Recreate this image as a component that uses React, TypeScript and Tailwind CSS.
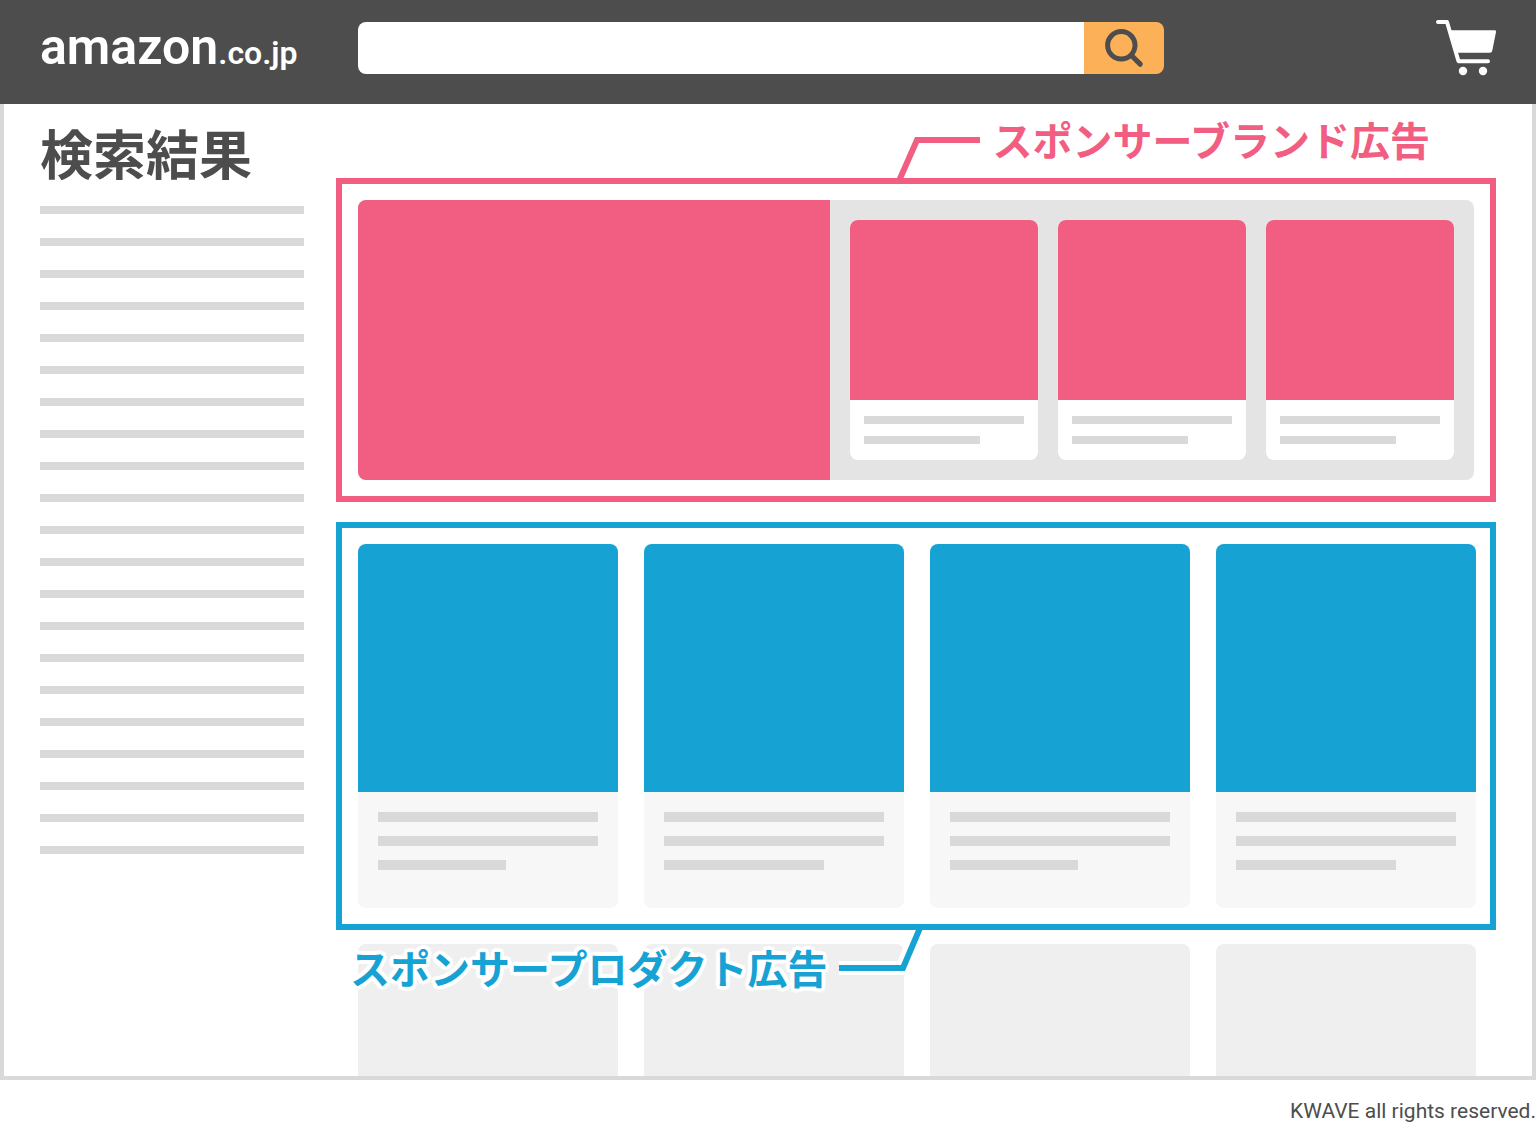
import clsx from 'clsx'

const sideLines = Array.from({ length: 21 }, (_, i) => i)
const brandItems = [1, 2, 3]
const products = [
    { id: 1, lastLine: 'w-32' },
    { id: 2, lastLine: 'w-40' },
    { id: 3, lastLine: 'w-32' },
    { id: 4, lastLine: 'w-40' },
]

function SearchIcon() {
    return (
        <svg viewBox="0 0 40 40" className="h-10 w-10" fill="none" stroke="#4d4d4d" aria-hidden="true">
            <circle cx="17.3" cy="17.3" r="13.7" strokeWidth="5" />
            <path d="M27.5 27.5L36.2 36.2" strokeWidth="5.2" strokeLinecap="round" />
        </svg>
    )
}

function CartIcon() {
    return (
        <svg viewBox="0 0 60 56" className="h-14 w-15" fill="none" aria-hidden="true">
            <path
                d="M2 2H11L22.500 41.300H52"
                stroke="#fff"
                strokeWidth="4"
                strokeLinecap="round"
                strokeLinejoin="round"
            />
            <path d="M13 10.300H59Q60.200 10.300 60 12L56.200 31Q55.700 32.800 54 32.800H20Z" fill="#fff" />
            <circle cx="27" cy="51" r="4.200" fill="#fff" />
            <circle cx="47" cy="51" r="4.200" fill="#fff" />
        </svg>
    )
}

function Header() {
    return (
        <header className="flex h-26 items-start bg-[#4d4d4d] px-10 pt-5">
            <a href="#" className="w-[318px] shrink-0 text-[50px] leading-[54px] font-semibold text-white">
                amazon<span className="text-[32px]">.co.jp</span>
            </a>
            <form className="mt-0.5 mr-[272px] flex h-13 flex-1 overflow-hidden rounded-lg" onSubmit={(e) => e.preventDefault()}>
                <input type="search" aria-label="検索" className="min-w-0 flex-1 bg-white px-4 text-2xl text-[#4d4d4d] outline-none" />
                <button type="submit" aria-label="検索する" className="flex w-20 items-center justify-center bg-[#fcb058]">
                    <SearchIcon />
                </button>
            </form>
            <button type="button" aria-label="カート" className="shrink-0">
                <CartIcon />
            </button>
        </header>
    )
}

function Sidebar() {
    return (
        <aside className="w-[264px] shrink-0">
            <h1 className="flex h-[102px] items-center pt-1 text-[53px] leading-none font-bold text-[#4d4d4d]">検索結果</h1>
            <div className="flex flex-col gap-6">
                {sideLines.map((line) => (
                    <div key={line} className="h-2 bg-[#d9d9d9]" />
                ))}
            </div>
        </aside>
    )
}

function SponsoredBrand() {
    return (
        <section>
            <div className="flex h-[74px] items-end justify-end pr-[66px]">
                <svg viewBox="0 0 84 74" className="mr-3 h-[74px] w-21" fill="none" aria-hidden="true">
                    <path d="M84 36H21L2.500 78" stroke="#f25e81" strokeWidth="6" />
                </svg>
                <h2 className="text-[40px] leading-[70px] font-bold whitespace-nowrap text-[#f25e81]">スポンサーブランド広告</h2>
            </div>
            <div className="border-6 border-[#f25e81] p-4">
                <div className="grid grid-cols-[472fr_644fr] overflow-hidden rounded-lg bg-[#e4e4e4]">
                    <div className="bg-[#f25e81]" />
                    <div className="grid grid-cols-3 gap-5 p-5">
                        {brandItems.map((item) => (
                            <div key={item} className="overflow-hidden rounded-lg bg-white">
                                <div className="h-45 bg-[#f25e81]" />
                                <div className="flex h-15 flex-col gap-3 px-3.5 pt-4">
                                    <div className="h-2 bg-[#d9d9d9]" />
                                    <div className="h-2 w-29 bg-[#d9d9d9]" />
                                </div>
                            </div>
                        ))}
                    </div>
                </div>
            </div>
        </section>
    )
}

function SponsoredProducts() {
    return (
        <section className="relative mt-5">
            <div className="grid grid-cols-4 gap-[26px] border-6 border-[#17a2d4] py-4 pr-3.5 pl-4">
                {products.map((product) => (
                    <div key={product.id} className="overflow-hidden rounded-lg bg-[#f7f7f7]">
                        <div className="h-62 bg-[#17a2d4]" />
                        <div className="flex h-29 flex-col gap-3.5 p-5">
                            <div className="h-2.5 bg-[#d9d9d9]" />
                            <div className="h-2.5 bg-[#d9d9d9]" />
                            <div className={clsx('h-2.5 bg-[#d9d9d9]', product.lastLine)} />
                        </div>
                    </div>
                ))}
            </div>

            {/* Callout, sits over the organic results below */}
            <div className="absolute top-full left-3.5 flex h-20 items-start">
                <h2 className="text-[40px] leading-[82px] font-bold whitespace-nowrap text-[#17a2d4] [text-shadow:4px_0_1px_#fff,-4px_0_1px_#fff,0_4px_1px_#fff,0_-4px_1px_#fff,3px_3px_1px_#fff,-3px_3px_1px_#fff,3px_-3px_1px_#fff,-3px_-3px_1px_#fff,2px_0_1px_#fff,-2px_0_1px_#fff]">
                    スポンサープロダクト広告
                </h2>
                <svg viewBox="0 0 90 56" className="ml-1.5 h-14 w-[90px]" fill="none" aria-hidden="true">
                    <path d="M5 38H68L84 2" stroke="#fff" strokeWidth="14" />
                    <path d="M5 38H69L86 -2" stroke="#17a2d4" strokeWidth="6" />
                </svg>
            </div>
        </section>
    )
}

function OrganicResults() {
    return (
        <div className="mt-3.5 grid grid-cols-4 gap-[26px] pr-5 pl-[22px]">
            {products.map((product) => (
                <div key={product.id} className="h-33 rounded-t-lg bg-[#efefef]" />
            ))}
        </div>
    )
}

export default function App() {
    return (
        <div className="bg-white font-['Roboto','Noto_Sans_CJK_JP',sans-serif]">
            <Header />
            <main className="flex gap-8 border-x-4 border-b-4 border-[#d9d9d9] px-9">
                <Sidebar />
                <div className="min-w-0 flex-1">
                    <SponsoredBrand />
                    <SponsoredProducts />
                    <OrganicResults />
                </div>
            </main>
            <footer className="flex h-11 justify-end text-[21px] text-[#4d4d4d]">
                <p className="leading-[62px]">KWAVE all rights reserved.</p>
            </footer>
        </div>
    )
}
